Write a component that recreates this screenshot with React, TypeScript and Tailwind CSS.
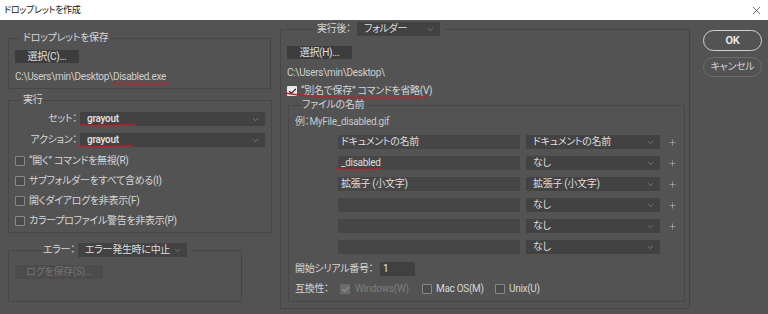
import React from 'react'
import { ChevronDown, X, Plus, Check } from 'lucide-react'

function Select({ value, className, children }: { value: string; className: string; children?: React.ReactNode }) {
  return (
    <div className={`flex items-center justify-between whitespace-nowrap bg-[#424242] pl-[7px] pr-[5px] text-[#dedede] ${className}`}>
      <span className="relative">
        {value}
        {children}
      </span>
      <ChevronDown size={9} strokeWidth={1.5} className="shrink-0 text-[#9a9a9a]" />
    </div>
  )
}

function Box({ checked, disabled }: { checked?: boolean; disabled?: boolean }) {
  if (checked && disabled) {
    return (
      <span className="flex h-[10px] w-[10px] shrink-0 items-center justify-center rounded-[1px] bg-[#6b6b6b]">
        <Check size={9} strokeWidth={3} className="text-[#8f8f8f]" />
      </span>
    )
  }
  if (checked) {
    return (
      <span className="flex h-[10px] w-[10px] shrink-0 items-center justify-center rounded-[1px] bg-[#e9e9e9]">
        <Check size={9} strokeWidth={3.2} className="text-[#2a2a2a]" />
      </span>
    )
  }
  return <span className="h-[10px] w-[10px] shrink-0 rounded-[1px] border border-[#888] bg-[#4a4a4a]" />
}

function Btn({ children, className, disabled }: { children: React.ReactNode; className: string; disabled?: boolean }) {
  return (
    <div
      className={`flex items-center justify-center whitespace-nowrap ${disabled ? 'bg-[#4c4c4c] text-[#757575]' : 'bg-[#3d3d3d] text-[#e2e2e2]'} ${className}`}
    >
      {children}
    </div>
  )
}

const rows: [string, string, boolean][] = [
  ['ドキュメントの名前', 'ドキュメントの名前', true],
  ['_disabled', 'なし', true],
  ['拡張子 (小文字)', '拡張子 (小文字)', true],
  ['', 'なし', true],
  ['', 'なし', true],
  ['', 'なし', false],
]

const checks = [
  '“開く” コマンドを無視(R)',
  'サブフォルダーをすべて含める(I)',
  '開くダイアログを非表示(F)',
  'カラープロファイル警告を非表示(P)',
]

export default function App() {
  return (
    <div className="flex h-[314px] w-[768px] flex-col overflow-hidden whitespace-nowrap bg-[#535353] font-['Roboto','Noto_Sans_CJK_JP',sans-serif] text-[10px] leading-[14px] tracking-[-0.3px] text-[#d6d6d6] [font-feature-settings:'palt']">
      <div className="flex h-[20px] items-center justify-between bg-white pl-[4px] pr-[5px] text-[9px] text-[#111]">
        <span>ドロップレットを作成</span>
        <X size={13} strokeWidth={1.2} className="text-[#222]" />
      </div>

      <div className="flex flex-1 items-start">
        {/* left column */}
        <div className="flex w-[271px] flex-col pl-[8px]">
          <fieldset className="mt-[11px] w-[263px] border border-[#474747] px-[6px] pb-[4px]">
            <legend className="ml-[6px] px-[2px]">ドロップレットを保存</legend>
            <Btn className="mt-[5px] h-[13px] w-[64px]">選択(C)...</Btn>
            <div className="mt-[7px] text-[#cfcfcf]">
              {'C:\\Users\\min\\Desktop\\'}
              <span className="relative">
                Disabled.exe
                <svg className="absolute left-0 top-[11px] h-[4px] w-[56px]" viewBox="0 0 56 4">
                  <path d="M0 2 Q28 2.8 56 2" stroke="#b9242c" strokeWidth="1.6" fill="none" />
                </svg>
              </span>
            </div>
          </fieldset>

          <fieldset className="mt-[4px] w-[263px] border border-[#474747] px-[6px] pb-[1px]">
            <legend className="ml-[6px] px-[2px]">実行</legend>
            <div className="mt-[5px] flex items-center">
              <span className="w-[62px] text-right">セット：</span>
              <Select value="grayout" className="ml-[3px] h-[14px] w-[185px] font-semibold">
                <svg className="absolute left-[-8px] top-[11px] h-[5px] w-[56px]" viewBox="0 0 56 5">
                  <path d="M0 2 Q28 4 56 1.5" stroke="#b9242c" strokeWidth="1.6" fill="none" />
                </svg>
              </Select>
            </div>
            <div className="mt-[7px] flex items-center">
              <span className="w-[62px] text-right">アクション：</span>
              <Select value="grayout" className="ml-[3px] h-[14px] w-[185px] font-semibold">
                <svg className="absolute left-[-10px] top-[11px] h-[5px] w-[56px]" viewBox="0 0 56 5">
                  <path d="M0 2 Q28 4 56 1.5" stroke="#b9242c" strokeWidth="1.6" fill="none" />
                </svg>
              </Select>
            </div>
            <div className="mt-[4px] flex flex-col">
              {checks.map((c) => (
                <div key={c} className="flex h-[20px] items-center gap-[4px]">
                  <Box />
                  <span>{c}</span>
                </div>
              ))}
            </div>
          </fieldset>

          <fieldset className="mt-[10px] h-[59px] w-[234px] border border-[#474747] px-[6px]">
            <legend className="ml-[28px] pr-[4px]">
              <div className="flex items-center">
                <span className="w-[33px]">エラー：</span>
                <Select value="エラー発生時に中止" className="ml-[2px] h-[14px] w-[109px]" />
              </div>
            </legend>
            <Btn disabled className="mt-[8px] h-[14px] w-[88px]">
              ログを保存(S)...
            </Btn>
          </fieldset>
        </div>

        {/* middle panel */}
        <fieldset className="ml-[9px] mt-[2px] w-[410px] border border-[#474747] pb-[6px] pl-[6px]">
          <legend className="ml-[30px] pr-[4px]">
            <div className="flex items-center">
              <span className="w-[34px]">実行後：</span>
              <Select value="フォルダー" className="ml-[6px] h-[14px] w-[83px]" />
            </div>
          </legend>
          <Btn className="mt-[10px] h-[13px] w-[65px]">選択(H)...</Btn>
          <div className="mt-[7px] text-[#cfcfcf]">{'C:\\Users\\min\\Desktop\\'}</div>
          <div className="relative mt-[4px] flex items-center gap-[4px]">
            <Box checked />
            <span>“別名で保存” コマンドを省略(V)</span>
            <svg className="absolute left-[-2px] top-0 h-[18px] w-[144px]" viewBox="0 0 144 18">
              <path d="M0 9 Q40 16 142 13.5" stroke="#b9242c" strokeWidth="1.6" fill="none" />
            </svg>
          </div>

          <fieldset className="ml-[1px] w-[397px] border border-[#474747] pb-[5px] pl-[6px]">
            <legend className="ml-[5px] px-[2px]">ファイルの名前</legend>
            <div className="mt-[3px] text-[#c8c8c8]">例：MyFile_disabled.gif</div>
            <div className="mt-[6px] flex flex-col gap-[7px]">
              {rows.map(([a, b, plus], i) => (
                <div key={i} className="flex h-[14px] items-center pl-[43px]">
                  <div className="flex h-[14px] w-[182px] items-center bg-[#464646] pl-[3px] text-[#dedede]">
                    <span className="relative">
                      {a}
                      {a === '_disabled' && (
                        <svg className="absolute left-[-6px] top-[11px] h-[5px] w-[46px]" viewBox="0 0 46 5">
                          <path d="M0 2 Q23 4 46 2" stroke="#b9242c" strokeWidth="1.6" fill="none" />
                        </svg>
                      )}
                    </span>
                  </div>
                  <Select value={b} className="ml-[6px] h-[14px] w-[134px]" />
                  {plus && <Plus size={9} strokeWidth={1.5} className="ml-[8px] text-[#bdbdbd]" />}
                </div>
              ))}
            </div>
            <div className="mt-[8px] flex items-center">
              <span className="w-[85px]">開始シリアル番号：</span>
              <div className="flex h-[14px] w-[35px] items-center bg-[#404040] pl-[3px] text-[#e6e6e6]">1</div>
            </div>
            <div className="mt-[6px] flex items-center">
              <span className="w-[45px]">互換性：</span>
              <div className="flex w-[82px] items-center gap-[5px]">
                <Box checked disabled />
                <span className="text-[#7c7c7c]">Windows(W)</span>
              </div>
              <div className="flex w-[73px] items-center gap-[4px]">
                <Box />
                <span>Mac OS(M)</span>
              </div>
              <div className="flex items-center gap-[4px]">
                <Box />
                <span>Unix(U)</span>
              </div>
            </div>
          </fieldset>
        </fieldset>

        {/* buttons */}
        <div className="ml-[13px] mt-[10px] flex w-[59px] flex-col">
          <div className="flex h-[21px] items-center justify-center rounded-full border-[1.5px] border-[#cfcfcf] text-[11px] font-semibold text-[#ececec]">
            OK
          </div>
          <div className="mt-[6px] flex h-[20px] items-center justify-center rounded-full border border-[#6c6c6c] text-[#d2d2d2]">
            キャンセル
          </div>
        </div>
      </div>
    </div>
  )
}
